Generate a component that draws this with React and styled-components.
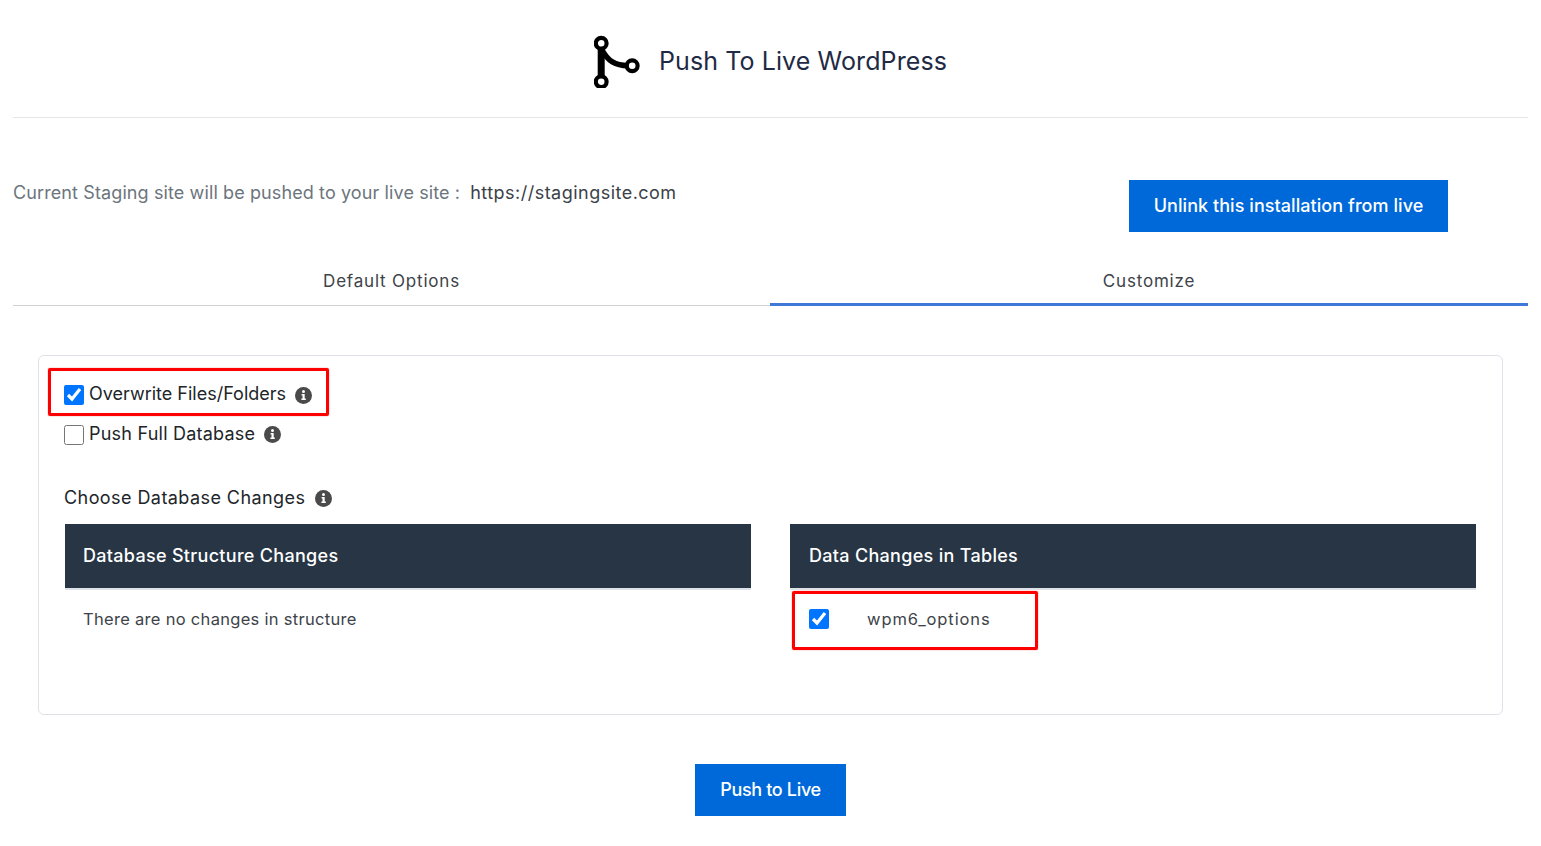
import React from 'react';
import styled, { createGlobalStyle } from 'styled-components';

const GlobalStyle = createGlobalStyle`
    html, body {
        margin: 0;
        padding: 0;
        background: #fff;
    }
    body {
        font-family: Inter, "Noto Sans", sans-serif;
        color: #212529;
    }
`;

function BranchIcon() {
    return (
        <svg width="46" height="54" viewBox="0 0 46 54" fill="none" stroke="#000">
            <path d="M7.2 12 V44" strokeWidth="7" />
            <path d="M8 16 C14 27 21 31.7 34 31.7" strokeWidth="5.6" />
            <circle cx="7.2" cy="9.3" r="5.4" fill="#fff" strokeWidth="4.2" />
            <circle cx="7.2" cy="47.7" r="5.4" fill="#fff" strokeWidth="4.2" />
            <circle cx="38.2" cy="31.7" r="5.4" fill="#fff" strokeWidth="4.2" />
        </svg>
    );
}

function InfoIcon() {
    return (
        <svg width="17" height="17" viewBox="0 0 17 17">
            <circle cx="8.5" cy="8.5" r="8.5" fill="#4a4a4a" />
            <circle cx="8.5" cy="4.6" r="1.5" fill="#fff" />
            <path d="M6.6 7 H9.7 V11.6 H10.8 V13 H6.4 V11.6 H7.5 V8.4 H6.6 Z" fill="#fff" />
        </svg>
    );
}

export default function App() {
    return (
        <Page>
            <GlobalStyle />
            <Header>
                <BranchIcon />
                <Title>Push To Live WordPress</Title>
            </Header>
            <StagingRow>
                <StagingText>
                    <Muted>Current Staging site will be pushed to your live site :</Muted>
                    <SiteUrl>https://stagingsite.com</SiteUrl>
                </StagingText>
                <UnlinkButton>Unlink this installation from live</UnlinkButton>
            </StagingRow>
            <Tabs>
                <Tab>Default Options</Tab>
                <Tab $active>Customize</Tab>
            </Tabs>
            <Card>
                <OptionRow>
                    <Check type="checkbox" defaultChecked />
                    <OptionLabel $lift={3}>Overwrite Files/Folders</OptionLabel>
                    <InfoIcon />
                    <Marker $left={-16} $top={-7} $width={281} $height={48} />
                </OptionRow>
                <OptionRow $iconLift={2}>
                    <Check type="checkbox" />
                    <OptionLabel $lift={4} $spacing={0.22}>Push Full Database</OptionLabel>
                    <InfoIcon />
                </OptionRow>
                <ChooseRow>
                    <OptionLabel $lift={2} $spacing={0.43}>Choose Database Changes</OptionLabel>
                    <InfoIcon />
                </ChooseRow>
                <Columns>
                    <Column>
                        <ColumnHead>Database Structure Changes</ColumnHead>
                        <ColumnRow>
                            <CellText>There are no changes in structure</CellText>
                        </ColumnRow>
                    </Column>
                    <Column $wide>
                        <ColumnHead>Data Changes in Tables</ColumnHead>
                        <ColumnRow>
                            <Check type="checkbox" defaultChecked />
                            <TableName>wpm6_options</TableName>
                            <Marker $left={2} $top={1} $width={246} $height={59} />
                        </ColumnRow>
                    </Column>
                </Columns>
            </Card>
            <Footer>
                <PushButton>Push to Live</PushButton>
            </Footer>
        </Page>
    );
}

const Page = styled.div`
    width: 1541px;
    height: 846px;
    padding: 0 13px;
    box-sizing: border-box;
    overflow: hidden;
`;

const Header = styled.div`
    height: 118px;
    box-sizing: border-box;
    padding-top: 5px;
    border-bottom: 1px solid #e4e6e8;
    display: flex;
    align-items: center;
    justify-content: center;
    gap: 19px;
`;

const Title = styled.h1`
    margin: 0;
    font-size: 25px;
    font-weight: 400;
    letter-spacing: 0.1px;
    color: #1f2a44;
`;

const StagingRow = styled.div`
    height: 114px;
    padding-top: 62px;
    padding-right: 80px;
    box-sizing: border-box;
    display: flex;
    align-items: flex-start;
    justify-content: space-between;
`;

const StagingText = styled.div`
    display: flex;
    gap: 10px;
    font-size: 18px;
    line-height: 27px;
    margin-top: -1px;
`;

const Muted = styled.span`
    color: #6c757d;
    letter-spacing: 0.11px;
`;

const SiteUrl = styled.span`
    color: #3b4148;
    letter-spacing: 0.48px;
`;

const BlueButton = styled.button`
    background: #0069d9;
    color: #fff;
    border: none;
    height: 52px;
    padding: 0 0 2px;
    font-family: inherit;
    font-size: 18px;
    font-weight: 500;
    cursor: pointer;
`;

const UnlinkButton = styled(BlueButton)`
    width: 319px;
    letter-spacing: 0.06px;
`;

const Tabs = styled.div`
    display: grid;
    grid-template-columns: 757px 758px;
    height: 74px;
    padding-top: 26px;
    box-sizing: border-box;
`;

const Tab = styled.div`
    display: flex;
    align-items: center;
    justify-content: center;
    height: 48px;
    box-sizing: border-box;
    padding-bottom: ${({ $active }) => ($active ? '0' : '2px')};
    font-size: 17px;
    letter-spacing: 0.8px;
    color: #3d4349;
    border-bottom: ${({ $active }) => ($active ? '3px solid #3f78d6' : '1px solid #cfd2d4')};
`;

const Card = styled.div`
    margin: 49px 25px 0;
    height: 360px;
    box-sizing: border-box;
    border: 1px solid #dee2e6;
    border-radius: 6px;
    padding: 19px 25px 0;
`;

const OptionRow = styled.div`
    position: relative;
    display: flex;
    align-items: center;
    height: 40px;
    & > svg {
        margin-left: 9px;
        margin-top: -${({ $iconLift }) => $iconLift || 0}px;
    }
`;

const Check = styled.input`
    width: 20px;
    height: 20px;
    margin: 0 5px 0 0;
    accent-color: #0075ff;
    flex-shrink: 0;
`;

const OptionLabel = styled.span`
    font-size: 18px;
    color: #212529;
    letter-spacing: ${({ $spacing }) => $spacing || 0}px;
    margin-top: -${({ $lift }) => $lift || 0}px;
`;

const Marker = styled.div`
    position: absolute;
    left: ${({ $left }) => $left}px;
    top: ${({ $top }) => $top}px;
    width: ${({ $width }) => $width}px;
    height: ${({ $height }) => $height}px;
    box-sizing: border-box;
    border: 3px solid #ff0000;
    border-radius: 2px;
    box-shadow: 0 0 1px #ff0000;
    pointer-events: none;
`;

const ChooseRow = styled.div`
    display: flex;
    align-items: center;
    gap: 10px;
    height: 28px;
    margin-top: 29px;
`;

const Columns = styled.div`
    display: grid;
    grid-template-columns: 686px 686px;
    column-gap: 39px;
    margin-top: 12px;
    padding-left: 1px;
`;

const Column = styled.div`
    --cell-pad: ${({ $wide }) => ($wide ? '19px' : '18px')};
`;

const ColumnHead = styled.div`
    height: 66px;
    box-sizing: border-box;
    background: #273545;
    border-bottom: 2px solid #dee2e6;
    color: #fff;
    display: flex;
    align-items: center;
    padding: 0 var(--cell-pad) 2px;
    font-size: 18px;
    font-weight: 500;
    letter-spacing: 0.3px;
`;

const ColumnRow = styled.div`
    position: relative;
    display: flex;
    align-items: center;
    height: 58px;
    padding: 0 var(--cell-pad);
`;

const CellText = styled.span`
    font-size: 16.5px;
    letter-spacing: 0.3px;
    color: #3d4349;
`;

const TableName = styled.span`
    font-size: 16.5px;
    letter-spacing: 0.9px;
    color: #3d4349;
    margin-left: 33px;
`;

const Footer = styled.div`
    display: flex;
    justify-content: center;
    margin-top: 49px;
`;

const PushButton = styled(BlueButton)`
    width: 151px;
    letter-spacing: -0.33px;
`;
